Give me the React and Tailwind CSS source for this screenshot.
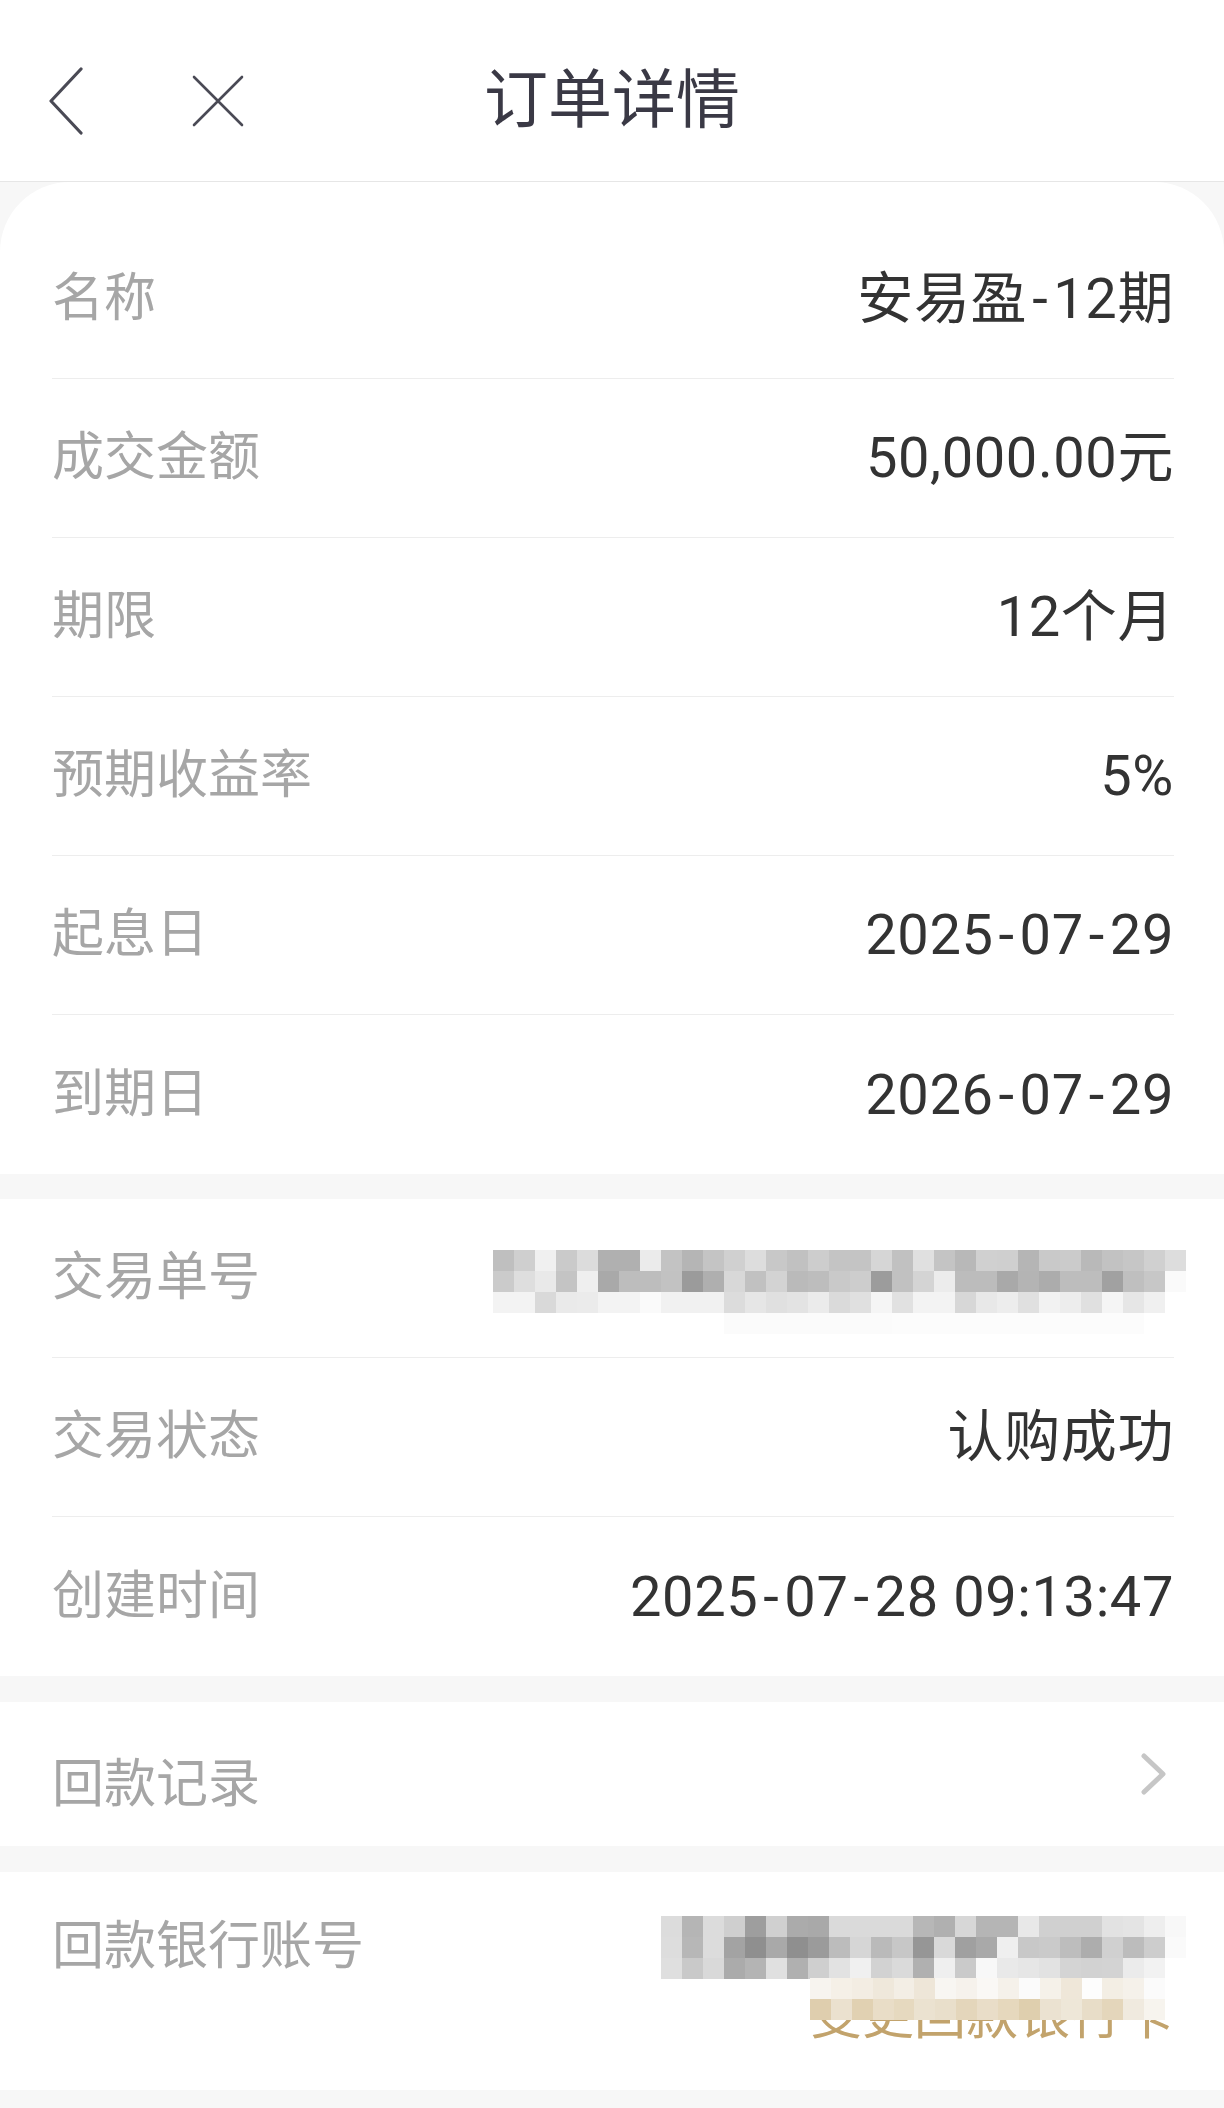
import React from 'react';

const FONT = { fontFamily: 'Roboto, "Noto Sans CJK SC", sans-serif' };

// mosaic cells of the redacted values
const txnMosaic = [
  ['bfbfbf','cfcfcf','f0f0f0','cacaca','dcdcdc','b0b0b0','b0b0b0','ebebeb','c3c3c3','b5b5b5','c4c4c4','d0d0d0','dddddd','c8c8c8','c1c1c1','cdcdcd','c4c4c4','c4c4c4','d6d6d6','c1c1c1','e0e0e0','c4c4c4','b8b8b8','d0d0d0','cfcfcf','b5b5b5','c9c9c9','cbcbcb','b9b9b9','c2c2c2','c6c6c6','d0d0d0','dddddd'],
  ['cbcbcb','dedede','e9e9e9','c4c4c4','efefef','a9a9a9','bdbdbd','bdbdbd','c2c2c2','9b9b9b','afafaf','d8d8d8','c1c1c1','d3d3d3','bababa','bdbdbd','c9c9c9','cdcdcd','9c9c9c','c1c1c1','d4d4d4','ececec','bcbcbc','bcbcbc','a9a9a9','b4b4b4','acacac','bdbdbd','bdbdbd','a1a1a1','bfbfbf','c7c7c7','fafafa'],
  ['f3f3f3','f3f3f3','d9d9d9','eaeaea','ebebeb','f3f3f3','f3f3f3','fafafa','f1f1f1','f1f1f1','f1f1f1','dcdcdc','e6e6e6','e0e0e0','e3e3e3','ebebeb','dadada','e0e0e0','f5f5f5','e1e1e1','f3f3f3','f3f3f3','d7d7d7','e8e8e8','ededed','e0e0e0','f2f2f2','ededed','e0e0e0','f5f5f5','e6e6e6','f0f0f0','ffffff'],
  ['ffffff','ffffff','ffffff','ffffff','ffffff','ffffff','ffffff','ffffff','ffffff','ffffff','ffffff','fbfbfb','fbfbfb','fbfbfb','fbfbfb','fbfbfb','fbfbfb','fbfbfb','fbfbfb','fcfcfc','fcfcfc','fcfcfc','fcfcfc','fcfcfc','fcfcfc','fcfcfc','fcfcfc','fcfcfc','fcfcfc','fcfcfc','fcfcfc','ffffff','ffffff'],
];

const bankMosaic = [
  ['dcdcdc','b5b5b5','dcdcdc','cfcfcf','9e9e9e','d0d0d0','ababab','a9a9a9','dadada','dadada','dadada','dadada','b7b7b7','b0b0b0','d7d7d7','b5b5b5','b5b5b5','e8e8e8','d0d0d0','d0d0d0','d0d0d0','e2e2e2','e4e4e4','eeeeee','f8f8f8'],
  ['dddddd','b7b7b7','dcdcdc','a3a3a3','8f8f8f','a9a9a9','8f8f8f','9b9b9b','bcbcbc','d6d6d6','bababa','c7c7c7','969696','d9d9d9','a0a0a0','a9a9a9','efefef','c8c8c8','cacaca','bdbdbd','adadad','d0d0d0','bcbcbc','cdcdcd','fafafa'],
  ['dfdfdf','c9c9c9','d9d9d9','ababab','b4b4b4','e0e0e0','b0b0b0','cfcfcf','e2e2e2','f0f0f0','d2d2d2','dadada','b0b0b0','efefef','cacaca','f8f8f8','e9e9e9','e6e6e6','e2e2e2','d4d4d4','d2d2d2','d3d3d3','ebebeb','f2f2f2','ffffff'],
];

const goldMosaic = [
  ['f7f4ef','f5f0e7','f3ede3','efe8db','f3eee5','eee6d8','f8f6f2','f6f2ec','faf8f5','f5f1ea','fbfbfb','f5f1e9','efe7d9','fdfdfd','f3eee4','f5f1ea','fbfbfb','ffffff'],
  ['dfceae','ebe1cf','e1d1b2','e9ddc7','e6d9bf','ebe2d0','e9dfcb','e4d6bb','e9ddc8','e6d8bd','dfcfae','ebe2d1','eee7d8','e8ddc8','e4d6bb','f0eadf','f7f4ee','ffffff'],
];

const Mosaic = ({ rows, className = '' }) => (
  <div className={`flex flex-col ${className}`}>
    {rows.map((row, i) => (
      <div key={i} className="flex">
        {row.map((c, j) => (
          <div key={j} className="w-[21px] h-[21px]" style={{ backgroundColor: `#${c}` }} />
        ))}
      </div>
    ))}
  </div>
);

// the app font draws a wide hyphen; pad it out
const Value = ({ text }) => {
  const parts = text.split('-');
  return (
    <span className="text-[56px] leading-none text-[#333333] tracking-[0.6px]">
      {parts.map((p, i) => (
        <React.Fragment key={i}>
          {i > 0 && <span className="px-[5px]">-</span>}
          {p}
        </React.Fragment>
      ))}
    </span>
  );
};

const Row = ({ label, value, last, children }) => (
  <div className={`h-[159px] flex items-center justify-between ${last ? '' : 'border-b border-[#ededed]'}`}>
    <span className="text-[52px] leading-none text-[#a6a6a6]">{label}</span>
    {children || <Value text={value} />}
  </div>
);

const App = () => {
  return (
    <div className="min-h-[2108px] bg-[#f7f7f7]" style={FONT}>
      {/* Header */}
      <header className="h-[182px] bg-white border-b border-[#e6e6e6] pt-[20px] grid grid-cols-[1fr_auto_1fr] items-center">
        <div className="flex items-center pl-[48px] gap-[108px]">
          <svg width="36" height="68" viewBox="0 0 36 68" fill="none" stroke="#4a4a55" strokeWidth="3.2" strokeLinecap="round" strokeLinejoin="round">
            <path d="M33 2 L3 34 L33 66" />
          </svg>
          <svg width="52" height="52" viewBox="0 0 52 52" fill="none" stroke="#4a4a55" strokeWidth="2.6" strokeLinecap="round">
            <path d="M2 2 L50 50 M50 2 L2 50" />
          </svg>
        </div>
        <h1 className="text-[64px] leading-none text-[#3a3945] font-normal">订单详情</h1>
        <div />
      </header>

      {/* Product info */}
      <section className="bg-white rounded-t-[70px] pt-[38px] pl-[52px] pr-[50px]">
        <Row label="名称" value="安易盈-12期" />
        <Row label="成交金额" value="50,000.00元" />
        <Row label="期限" value="12个月" />
        <Row label="预期收益率" value="5%" />
        <Row label="起息日" value="2025-07-29" />
        <Row label="到期日" value="2026-07-29" last />
      </section>

      {/* Trade info */}
      <section className="bg-white mt-[25px] pl-[52px] pr-[50px]">
        <Row label="交易单号">
          <Mosaic rows={txnMosaic} className="mr-[-12px] mt-[27px]" />
        </Row>
        <Row label="交易状态" value="认购成功" />
        <Row label="创建时间" value="2025-07-28 09:13:47" last />
      </section>

      {/* Repayment records */}
      <section className="bg-white mt-[26px] h-[144px] pl-[52px] pr-[56px] flex items-center justify-between">
        <span className="text-[52px] leading-none text-[#a6a6a6] mt-[22px]">回款记录</span>
        <svg width="28" height="42" viewBox="0 0 28 42" fill="none" stroke="#c6c6c6" strokeWidth="5" strokeLinecap="round" strokeLinejoin="round">
          <path d="M4 3 L23 21 L4 39" />
        </svg>
      </section>

      {/* Repayment bank account */}
      <section className="bg-white mt-[26px] pt-[44px] pb-[43px] pl-[52px] pr-[50px] flex justify-between">
        <span className="text-[52px] leading-[62px] text-[#a6a6a6]">回款银行账号</span>
        <div className="flex flex-col items-end">
          <Mosaic rows={bankMosaic} className="mr-[-12px]" />
          <div className="relative mt-[8px]">
            <span className="block text-[52px] leading-[60px] text-[#c2a36c]">变更回款银行卡</span>
            <Mosaic rows={goldMosaic} className="absolute top-[-9px] left-0 right-[-12px]" />
          </div>
        </div>
      </section>
    </div>
  );
};

export default App;
